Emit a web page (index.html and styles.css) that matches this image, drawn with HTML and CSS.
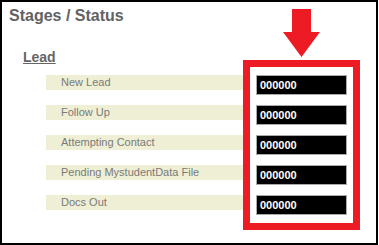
FILE: index.html
```html
<!DOCTYPE html>
<html lang="en">
  <head>
    <meta charset="UTF-8" />
    <meta name="viewport" content="width=device-width, initial-scale=1.0" />
    <title>Stages / Status</title>
    <link rel="stylesheet" href="styles.css">
  </head>
  <body>
    <div class="panel">
      <div class="stages">
        <h1>Stages / Status</h1>
        <h2>Lead</h2>
        <div class="stage-list">
          <div class="stage">New Lead</div>
          <div class="stage">Follow Up</div>
          <div class="stage">Attempting Contact</div>
          <div class="stage">Pending MystudentData File</div>
          <div class="stage">Docs Out</div>
        </div>
      </div>
      <div class="callout">
        <svg class="arrow" width="117" height="58" viewBox="0 0 117 58">
          <polygon points="49,7 68,7 68,30 77,30 58.5,55 40,30 49,30" fill="#ed1c24" />
        </svg>
        <div class="highlight">
          <input type="text" value="000000" readonly />
          <input type="text" value="000000" readonly />
          <input type="text" value="000000" readonly />
          <input type="text" value="000000" readonly />
          <input type="text" value="000000" readonly />
        </div>
      </div>
    </div>
  </body>
</html>
```

FILE: styles.css
```css
body {
  font-family: "Liberation Sans", Arial, sans-serif;
  background-color: #fff;
  margin: 0;
  padding: 0;
}
.panel {
  display: flex;
  box-sizing: border-box;
  width: 378px;
  height: 245px;
  border: 2px solid #000;
}
.stages {
  width: 241px;
  padding-top: 4px;
}
.stages h1 {
  margin: 0 0 0 7px;
  font-size: 16px;
  line-height: 20px;
  font-weight: bold;
  color: #626262;
}
.stages h2 {
  margin: 22px 0 0 21px;
  font-size: 14px;
  line-height: 18px;
  font-weight: bold;
  color: #666;
  text-decoration: underline;
}
.stage-list {
  margin: 9px 0 0 44px;
}
.stage {
  height: 15px;
  line-height: 15px;
  margin-bottom: 15px;
  padding-left: 15px;
  background-color: #efefd5;
  font-size: 11px;
  color: #7a7a7a;
}
.callout {
  width: 117px;
}
.arrow {
  display: block;
}
.highlight {
  display: flex;
  flex-direction: column;
  gap: 10px;
  border: 7px solid #ed1c24;
  padding: 8px 6px;
}
.highlight input {
  display: block;
  box-sizing: border-box;
  width: 91px;
  height: 20px;
  margin: 0;
  padding: 0 3px;
  border: 1px solid #aaa;
  background-color: #000;
  color: #fff;
  font-family: "Liberation Sans", Arial, sans-serif;
  font-size: 11px;
  font-weight: bold;
  outline: none;
}
```
